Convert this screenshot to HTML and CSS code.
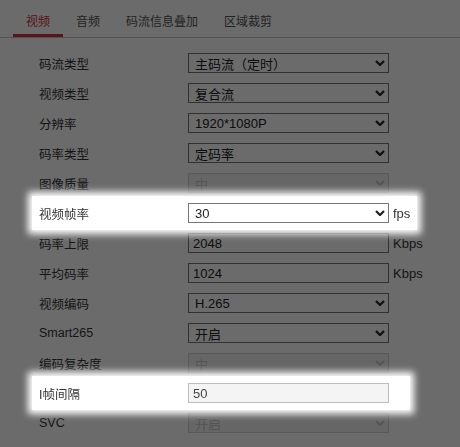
FILE: index.html
```html
<!DOCTYPE html>
<html lang="zh-CN">
<head>
<meta charset="utf-8">
<title>视频参数</title>
<link rel="stylesheet" href="styles.css">
</head>
<body>
<div class="tabs">
  <div class="tab active">视频</div>
  <div class="tab">音频</div>
  <div class="tab">码流信息叠加</div>
  <div class="tab">区域裁剪</div>
</div>
<div class="form">
  <div class="row"><span class="label">码流类型</span><div class="field select"><span>主码流（定时）</span><svg class="chev" width="10" height="6" viewBox="0 0 10 6"><path d="M1 1 L5 5 L9 1"/></svg></div></div>
  <div class="row"><span class="label">视频类型</span><div class="field select"><span>复合流</span><svg class="chev" width="10" height="6" viewBox="0 0 10 6"><path d="M1 1 L5 5 L9 1"/></svg></div></div>
  <div class="row"><span class="label">分辨率</span><div class="field select"><span>1920*1080P</span><svg class="chev" width="10" height="6" viewBox="0 0 10 6"><path d="M1 1 L5 5 L9 1"/></svg></div></div>
  <div class="row"><span class="label">码率类型</span><div class="field select"><span>定码率</span><svg class="chev" width="10" height="6" viewBox="0 0 10 6"><path d="M1 1 L5 5 L9 1"/></svg></div></div>
  <div class="row"><span class="label">图像质量</span><div class="field select disabled"><span>中</span><svg class="chev" width="10" height="6" viewBox="0 0 10 6"><path d="M1 1 L5 5 L9 1"/></svg></div></div>
  <div class="row hl"><span class="label">视频帧率</span><div class="field select"><span>30</span><svg class="chev" width="10" height="6" viewBox="0 0 10 6"><path d="M1 1 L5 5 L9 1"/></svg></div><span class="unit">fps</span></div>
  <div class="row"><span class="label">码率上限</span><div class="field input"><span>2048</span></div><span class="unit">Kbps</span></div>
  <div class="row"><span class="label">平均码率</span><div class="field input"><span>1024</span></div><span class="unit">Kbps</span></div>
  <div class="row"><span class="label">视频编码</span><div class="field select"><span>H.265</span><svg class="chev" width="10" height="6" viewBox="0 0 10 6"><path d="M1 1 L5 5 L9 1"/></svg></div></div>
  <div class="row"><span class="label">Smart265</span><div class="field select"><span>开启</span><svg class="chev" width="10" height="6" viewBox="0 0 10 6"><path d="M1 1 L5 5 L9 1"/></svg></div></div>
  <div class="row"><span class="label">编码复杂度</span><div class="field select disabled"><span>中</span><svg class="chev" width="10" height="6" viewBox="0 0 10 6"><path d="M1 1 L5 5 L9 1"/></svg></div></div>
  <div class="row hl hl-short"><span class="label">I帧间隔</span><div class="field input light"><span>50</span></div></div>
  <div class="row"><span class="label">SVC</span><div class="field select disabled"><span>开启</span><svg class="chev" width="10" height="6" viewBox="0 0 10 6"><path d="M1 1 L5 5 L9 1"/></svg></div></div>
</div>
<div class="dim"></div>
</body>
</html>
```
FILE: styles.css
```css
* { box-sizing: border-box; }
html, body { margin: 0; padding: 0; background: #fff; }
body {
  width: 460px;
  height: 447px;
  overflow: hidden;
  font-family: "Liberation Sans", "Noto Sans CJK SC", sans-serif;
  color: #333;
}
.tabs {
  display: flex;
  height: 38px;
  padding-left: 13px;
  border-bottom: 1px solid #c4c4c4;
}
.tab {
  padding: 15px 13px 0;
  font-size: 12px;
  line-height: 14px;
  color: #555;
  height: 37px;
}
.tab.active {
  color: #d4303c;
  border-bottom: 3px solid #d4303c;
}
.form {
  display: flex;
  flex-direction: column;
  gap: 10px;
  padding: 15px 0 0 32px;
}
.row {
  display: flex;
  align-items: center;
  height: 20px;
  padding: 0 7px;
  width: fit-content;
}
.label {
  width: 149px;
  font-size: 12.5px;
  color: #333;
}
.field {
  width: 201px;
  height: 20px;
  border: 1px solid #767676;
  display: flex;
  align-items: center;
  justify-content: space-between;
  padding: 0 3px 0 6px;
  font-size: 13px;
  color: #222;
  background: #fff;
}
.chev path {
  fill: none;
  stroke: #222;
  stroke-width: 2.2;
}
.field.disabled {
  background: #f3f3f3;
  border-color: #d2d2d2;
  color: #c9c9c9;
}
.field.disabled .chev path { stroke: #c9c9c9; }
.field.input { padding-left: 4px; }
.field.light {
  background: #f4f4f4;
  border-color: #bdbdbd;
  color: #444;
}
.unit {
  margin-left: 4px;
  font-size: 13px;
  color: #333;
}
.row.hl {
  position: relative;
  z-index: 2;
  height: 34px;
  margin: -7px 0;
  padding: 7px 7px 7px 7px;
  background: #fff;
  box-shadow: 0 0 7px 4px #fff;
}
.row.hl-short { padding-right: 21px; }
.dim {
  position: fixed;
  inset: 0;
  background: rgba(0, 0, 0, 0.58);
  z-index: 1;
}
```
